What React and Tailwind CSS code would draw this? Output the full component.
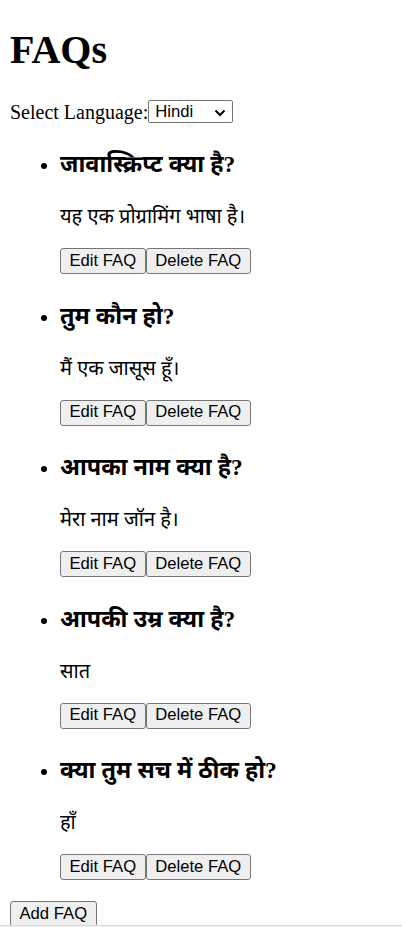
import React from 'react';

const faqs = [
  { q: 'जावास्क्रिप्ट क्या है', a: 'यह एक प्रोग्रामिंग भाषा है।' },
  { q: 'तुम कौन हो', a: 'मैं एक जासूस हूँ।' },
  { q: 'आपका नाम क्या है', a: 'मेरा नाम जॉन है।' },
  { q: 'आपकी उम्र क्या है', a: 'सात' },
  { q: 'क्या तुम सच में ठीक हो', a: 'हाँ' }
];

const deva = "font-['Noto_Sans_Devanagari','Lohit_Devanagari','Noto_Sans',sans-serif]";

function Btn({ children }) {
  return (
    <button className="h-[26px] px-[8.5px] border border-[#767676] bg-[#efefef] rounded-[3px] font-['Liberation_Sans',Arial,sans-serif] text-[16.67px] leading-none text-black">
      {children}
    </button>
  );
}

export default function App() {
  return (
    <div className="min-h-[927px] bg-white">
      <div className="px-[10px] pt-px font-['Liberation_Serif','Times_New_Roman',serif] text-[20px] text-black">
        {/* Header */}
        <h1 className="text-[40px] font-bold leading-[46px] mt-[26px] mb-[26px]">FAQs</h1>
        <div className="flex items-center h-[25px]">
          <span>Select Language:</span>
          <div className="relative w-[85px] h-[23px] border border-[#767676] rounded-[2px] bg-white flex items-center pl-[6px] font-['Liberation_Sans',Arial,sans-serif] text-[16.67px]">
            Hindi
            <svg className="absolute right-[6px] top-[8px]" width="12" height="8" viewBox="0 0 12 8">
              <path d="M1.5 1.5 L6 6 L10.5 1.5" fill="none" stroke="#000" strokeWidth="2" />
            </svg>
          </div>
        </div>

        {/* FAQ list */}
        <ul className="list-disc pl-[50px] mt-[26px] mb-[19px]">
          {faqs.map((f, i) => (
            <li key={i} className={i > 0 ? 'mt-[25.5px]' : ''}>
              <h3 className="text-[23.4px] font-bold leading-[29px] mb-[23px]">
                <span className={deva}>{f.q}</span>?
              </h3>
              <p className={`${deva} leading-[28px] mb-[16px]`}>{f.a}</p>
              <div className="flex h-[28px]">
                <Btn>Edit FAQ</Btn>
                <Btn>Delete FAQ</Btn>
              </div>
            </li>
          ))}
        </ul>

        <div className="flex">
          <Btn>Add FAQ</Btn>
        </div>
      </div>
      {/* horizontal scrollbar strip */}
      <div className="fixed left-0 right-0 bottom-0 h-[2px] bg-[#f1f1f1] border-t border-[#dadada]"></div>
    </div>
  );
}
